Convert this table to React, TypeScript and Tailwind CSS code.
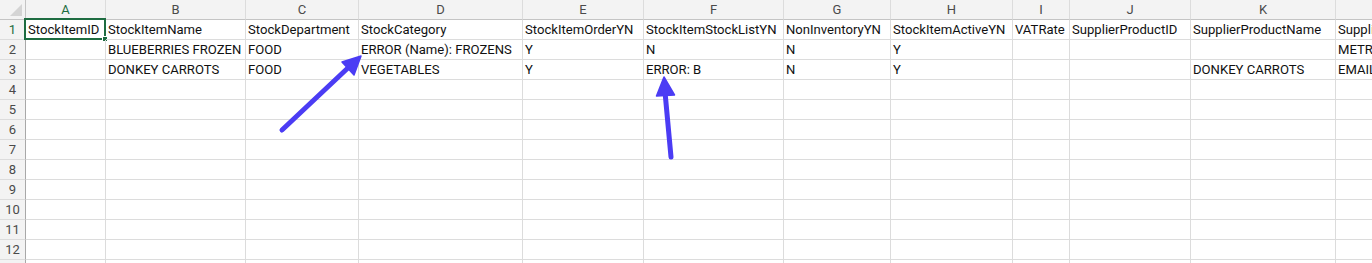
import React from "react";

const widths = [80, 140, 113, 164, 121, 140, 107, 122, 57, 121, 145, 220];
const letters = ["A", "B", "C", "D", "E", "F", "G", "H", "I", "J", "K", "L"];

const data: string[][] = [
  ["StockItemID", "StockItemName", "StockDepartment", "StockCategory", "StockItemOrderYN", "StockItemStockListYN", "NonInventoryYN", "StockItemActiveYN", "VATRate", "SupplierProductID", "SupplierProductName", "SupplierName"],
  ["", "BLUEBERRIES FROZEN", "FOOD", "ERROR (Name): FROZENS", "Y", "N", "N", "Y", "", "", "", "METRO"],
  ["", "DONKEY CARROTS", "FOOD", "VEGETABLES", "Y", "ERROR: B", "N", "Y", "", "", "DONKEY CARROTS", "EMAIL"],
];

const font = { fontFamily: "Roboto, 'Liberation Sans', sans-serif" };

export default function App() {
  const rows = Array.from({ length: 13 }, (_, i) => i + 1);
  return (
    <div className="relative w-[1372px] h-[263px] overflow-hidden bg-white" style={font}>
      <div className="flex h-[20px]">
        <div className="relative w-[26px] shrink-0 h-[20px] bg-[#f3f3f3] border-r border-b border-[#c4c4c4]">
          <svg className="absolute left-0 top-0" width="25" height="19" viewBox="0 0 25 19">
            <polygon points="22,4 22,16 10,16" fill="#d4d4d4" />
          </svg>
        </div>
        {letters.map((l, i) => (
          <div
            key={l}
            className={`shrink-0 h-[20px] bg-[#f3f3f3] border-r border-r-[#dcdcdc] border-b border-b-[#c4c4c4] flex items-center justify-center text-[13px] ${i === 0 ? "text-[#1e6c41]" : "text-[#4a4a4a]"}`}
            style={{ width: widths[i] }}
          >
            {l}
          </div>
        ))}
      </div>
      {rows.map((r) => (
        <div key={r} className="flex h-[20px]">
          <div
            className={`w-[26px] shrink-0 h-[20px] bg-[#f3f3f3] border-r border-r-[#a8a8a8] border-b border-b-[#dcdcdc] flex items-center justify-center text-[13px] ${r === 1 ? "text-[#1e6c41]" : "text-[#4a4a4a]"}`}
          >
            {r}
          </div>
          {widths.map((w, c) => {
            const text = data[r - 1]?.[c] ?? "";
            return (
              <div
                key={c}
                className="relative shrink-0 h-[20px] border-r border-b border-[#dcdcdc] flex items-center pl-[2px] text-[13.1px] text-[#111] whitespace-nowrap overflow-visible"
                style={{ width: w }}
              >
                {text}
                {r === 1 && c === 0 && (
                  <>
                    <div className="absolute -left-[2px] -top-[2px] -right-[1px] -bottom-[1px] border-2 border-[#1e6c41] pointer-events-none" />
                    <div className="absolute -right-[3px] -bottom-[3px] w-[6px] h-[6px] bg-[#1e6c41] border border-white" />
                  </>
                )}
              </div>
            );
          })}
        </div>
      ))}
      <svg className="absolute left-0 top-0 pointer-events-none" width="1372" height="263" viewBox="0 0 1372 263">
        <line x1="282" y1="130" x2="350" y2="66" stroke="#4b3cf4" strokeWidth="5" strokeLinecap="round" />
        <polygon points="361,56 354,75 342,62" fill="#4b3cf4" stroke="#4b3cf4" strokeWidth="1.5" strokeLinejoin="round" />
        <line x1="671" y1="157" x2="665" y2="92" stroke="#4b3cf4" strokeWidth="5" strokeLinecap="round" />
        <polygon points="664,77 674.5,95 656.5,96" fill="#4b3cf4" stroke="#4b3cf4" strokeWidth="1.5" strokeLinejoin="round" />
      </svg>
    </div>
  );
}
